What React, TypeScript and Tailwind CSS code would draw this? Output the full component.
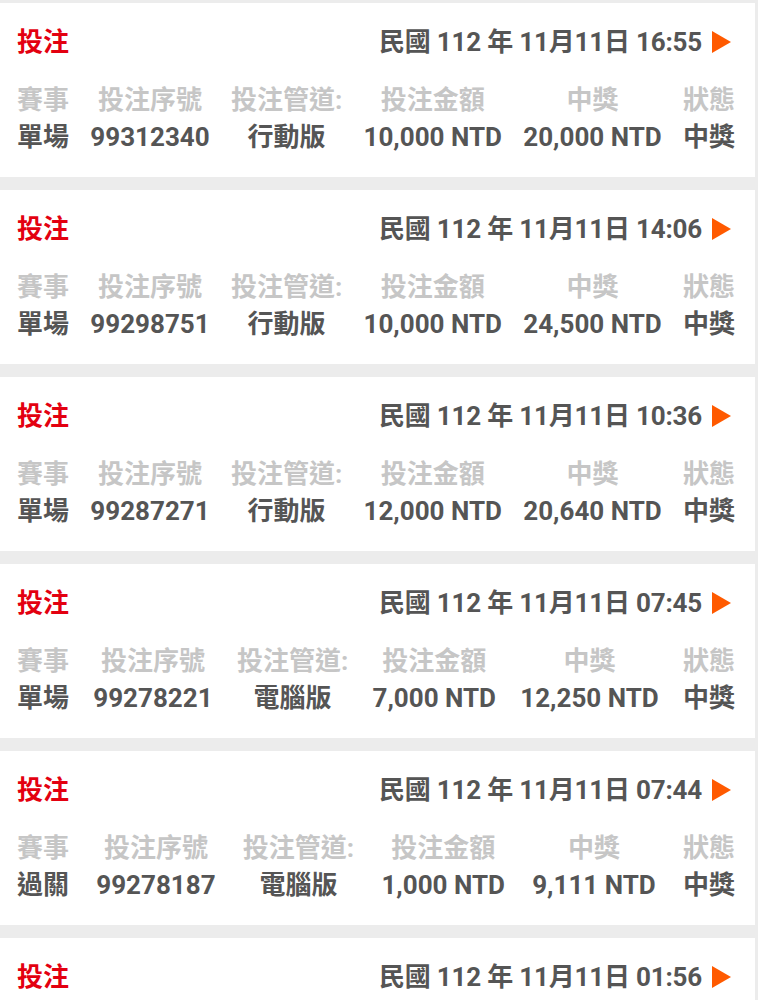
import React from "react";

interface BetRecord {
  time: string;
  event: string;
  serial: string;
  channel: string;
  amount: string;
  prize: string;
  status: string;
}

const records: BetRecord[] = [
  { time: "16:55", event: "單場", serial: "99312340", channel: "行動版", amount: "10,000 NTD", prize: "20,000 NTD", status: "中獎" },
  { time: "14:06", event: "單場", serial: "99298751", channel: "行動版", amount: "10,000 NTD", prize: "24,500 NTD", status: "中獎" },
  { time: "10:36", event: "單場", serial: "99287271", channel: "行動版", amount: "12,000 NTD", prize: "20,640 NTD", status: "中獎" },
  { time: "07:45", event: "單場", serial: "99278221", channel: "電腦版", amount: "7,000 NTD", prize: "12,250 NTD", status: "中獎" },
  { time: "07:44", event: "過關", serial: "99278187", channel: "電腦版", amount: "1,000 NTD", prize: "9,111 NTD", status: "中獎" },
];

const labels = ["賽事", "投注序號", "投注管道:", "投注金額", "中獎", "狀態"];

function Arrow() {
  return (
    <svg width="19" height="22" viewBox="0 0 19 22" className="ml-[10px] mr-[4px] shrink-0">
      <polygon points="0,0 19,11 0,22" fill="#ff5a00" />
    </svg>
  );
}

function CardHeader({ time }: { time: string }) {
  return (
    <div className="flex items-center justify-between h-[34px]">
      <span className="text-[26px] font-bold text-[#e30010]">投注</span>
      <div className="flex items-center">
        <span className="text-[26px] font-bold text-[#555555] tracking-[-0.2px]">
          民國 112 年 11月11日 {time}
        </span>
        <Arrow />
      </div>
    </div>
  );
}

function RecordCard({ record }: { record: BetRecord }) {
  const values = [record.event, record.serial, record.channel, record.amount, record.prize, record.status];

  return (
    <div className="bg-white w-[755px] h-[174px] shrink-0 pt-[22px] pl-[17px] pr-[20px]">
      <CardHeader time={record.time} />

      {/* Columns */}
      <div className="flex justify-between mt-[23px]">
        {labels.map((label, i) => (
          <div key={label} className="flex flex-col items-center">
            <span className="text-[26px] leading-[37px] font-bold text-[#c6c6c6] whitespace-nowrap">{label}</span>
            <span className="text-[26px] leading-[37px] font-bold text-[#555555] whitespace-nowrap">{values[i]}</span>
          </div>
        ))}
      </div>
    </div>
  );
}

export default function App() {
  return (
    <div
      className="bg-[#ececec] w-[758px] h-[1000px] overflow-hidden pt-[3px] flex flex-col gap-[13px]"
      style={{ fontFamily: "Roboto, 'Noto Sans CJK TC', sans-serif" }}
    >
      {records.map((r) => (
        <RecordCard key={r.time} record={r} />
      ))}
      {/* last card, only its header is on screen */}
      <div className="bg-white w-[755px] grow pt-[22px] pl-[17px] pr-[20px]">
        <CardHeader time="01:56" />
      </div>
    </div>
  );
}
